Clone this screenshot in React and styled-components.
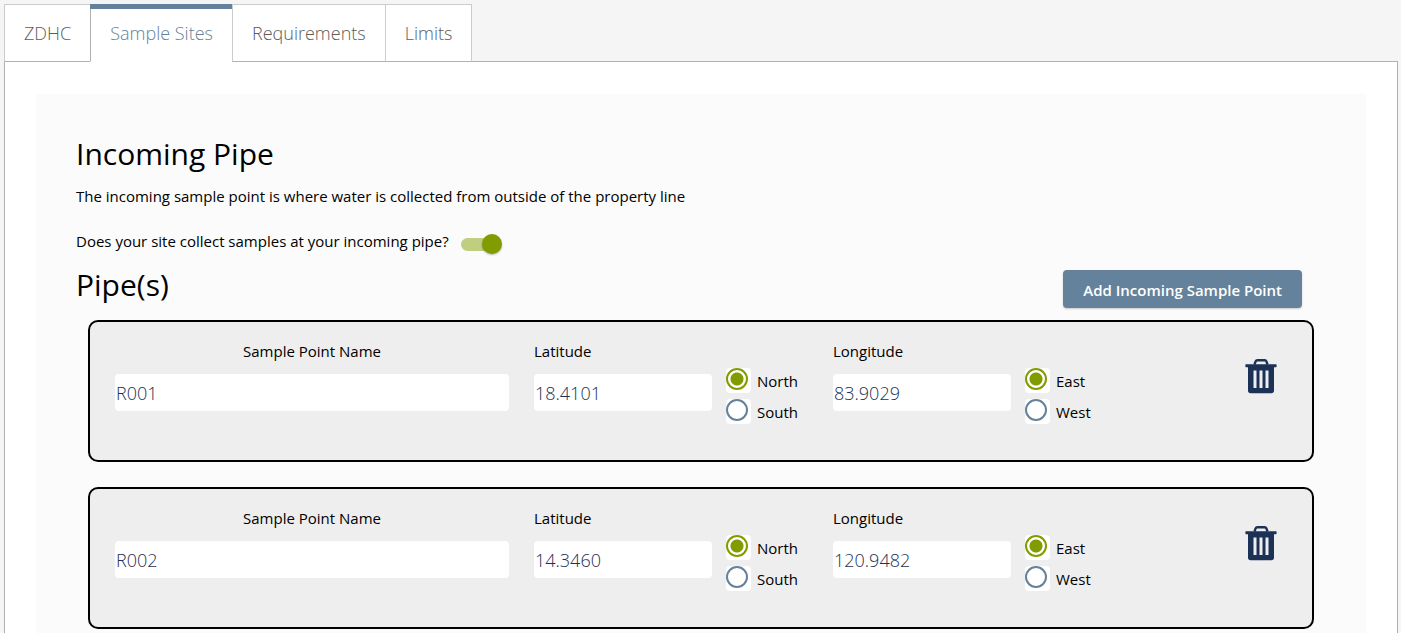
import React, { useState } from 'react';
import styled, { createGlobalStyle } from 'styled-components';

const GlobalStyle = createGlobalStyle`
  *,
  *::before,
  *::after {
    box-sizing: border-box;
  }

  body {
    margin: 0;
    background: #f5f5f5;
    color: #000;
    font-family: 'Open Sans', 'Noto Sans', sans-serif;
    font-size: 15px;
    line-height: 20px;
  }

  button,
  input {
    font-family: inherit;
  }
`;

const Page = styled.main`
  padding: 4px 3px 0 4px;
`;

const TabList = styled.div`
  display: flex;
`;

const Tab = styled.button`
  position: relative;
  height: 58px;
  margin-bottom: -1px;
  padding: 0 19px;
  border: solid #ccc;
  border-width: 1px 0 1px 1px;
  border-bottom-color: #b0b0b0;
  background: #fff;
  color: #5c5c5c;
  font-size: 18px;
  font-weight: 350;
  cursor: pointer;

  &:last-child {
    border-right-width: 1px;
  }

  &[aria-selected='true'] {
    border-left-color: #b0b0b0;
    border-bottom-color: #fff;
    color: #64829b;
  }

  &[aria-selected='true']::before {
    content: '';
    position: absolute;
    top: -1px;
    left: -1px;
    right: 0;
    height: 5px;
    background: #64829b;
  }
`;

const TabPanel = styled.div`
  padding: 32px 31px;
  border: 1px solid #b0b0b0;
  background: #fff;
`;

const Section = styled.section`
  padding: 40px;
  background: #fbfbfb;
`;

const Heading = styled.h2`
  margin: 0;
  font-size: 30px;
  font-weight: 400;
  line-height: 40px;
`;

const Description = styled.p`
  margin: 12px 0 25px;
`;

const ToggleRow = styled.label`
  display: flex;
  align-items: center;
  gap: 12px;
  height: 20px;
`;

const Switch = styled.input.attrs({ type: 'checkbox', role: 'switch' })`
  appearance: none;
  display: flex;
  align-items: center;
  width: 41px;
  height: 20px;
  margin: 6px 0 0;
  border-radius: 10px;
  background: linear-gradient(#ccc, #ccc) center / 100% 13px no-repeat;
  cursor: pointer;

  &::before {
    content: '';
    width: 20px;
    height: 20px;
    border-radius: 50%;
    background: #fafafa;
    box-shadow: 0 1px 2px rgba(0, 0, 0, 0.3);
  }

  &:checked {
    justify-content: flex-end;
    background: none;
  }

  &:checked::after {
    content: '';
    order: -1;
    width: 36px;
    height: 13px;
    margin-right: -15px;
    border-radius: 7px;
    background: #c0ce80;
  }

  &:checked::before {
    position: relative;
    background: #819c00;
  }
`;

const ListHeader = styled.div`
  display: flex;
  justify-content: space-between;
  align-items: flex-start;
  margin: 14px 24px 12px 0;
`;

const AddButton = styled.button`
  height: 38px;
  margin-top: 5px;
  padding: 2px 20px 0;
  border: 0;
  border-radius: 4px;
  background: #64829b;
  color: #fff;
  font-size: 15px;
  font-weight: 600;
  box-shadow: 0 1px 2px rgba(0, 0, 0, 0.2);
  cursor: pointer;
`;

const PointList = styled.div`
  display: flex;
  flex-direction: column;
  gap: 25px;
  margin: 0 12px;
`;

const PointCard = styled.div`
  display: grid;
  grid-template-columns: 394fr 274fr 274fr 155fr;
  column-gap: 25px;
  align-items: start;
  padding: 19px 25px 36px;
  border: 2px solid #000;
  border-radius: 10px;
  background: #eee;
`;

const NameField = styled.div`
  display: flex;
  flex-direction: column;
  gap: 13px;
  text-align: center;
`;

const CoordinateField = styled.div`
  display: grid;
  grid-template-columns: 1fr 82px;
  column-gap: 14px;
  align-items: start;
`;

const FieldLabel = styled.label`
  grid-column: 1 / -1;
`;

const TextInput = styled.input.attrs({ type: 'text' })`
  width: 100%;
  min-width: 0;
  height: 37px;
  padding: 0 1px;
  border: 0;
  border-radius: 4px;
  background: #fff;
  color: #1b3155;
  font-size: 18px;
  font-weight: 350;

  ${CoordinateField} & {
    margin-top: 13px;
  }
`;

const RadioGroup = styled.div`
  display: flex;
  flex-direction: column;
  gap: 6px;
  margin-top: 7px;
`;

const RadioLabel = styled.label`
  display: flex;
  align-items: center;
  gap: 6px;
  height: 25px;
`;

const Radio = styled.input.attrs({ type: 'radio' })`
  appearance: none;
  flex: none;
  width: 25px;
  height: 25px;
  margin: 0;
  border-radius: 4px;
  background: #fff;
  cursor: pointer;

  &::before {
    content: '';
    display: block;
    width: 22px;
    height: 22px;
    border: 2px solid #64829b;
    border-radius: 50%;
  }

  &:checked::before {
    border-color: #819c00;
    background: radial-gradient(circle, #819c00 6px, #fff 7px);
  }
`;

const DeleteButton = styled.button`
  justify-self: end;
  display: flex;
  margin: 18px 10px 0 0;
  padding: 0;
  border: 0;
  background: none;
  color: #1b3155;
  cursor: pointer;
`;

const TrashIcon = () => (
  <svg width="32" height="35" viewBox="0 0 32 35" fill="none" aria-hidden="true">
    <path d="M9.5 5.5 L10.6 2.4 Q11.1 1.2 12.4 1.2 H19.6 Q20.9 1.2 21.4 2.4 L22.5 5.5" stroke="currentColor" strokeWidth="2.4" />
    <path
      fill="currentColor"
      fillRule="evenodd"
      d="M1 5.2 H31 Q31.6 5.2 31.6 5.8 V7.6 Q31.6 8.2 31 8.2 H29 V31.5 Q29 34.2 26.3 34.2 H5.7 Q3 34.2 3 31.5 V8.2 H1 Q.4 8.2 .4 7.6 V5.8 Q.4 5.2 1 5.2 Z M8.5 11.5 V29 H11.5 V11.5 Z M14.5 11.5 V29 H17.5 V11.5 Z M20.5 11.5 V29 H23.5 V11.5 Z"
    />
  </svg>
);

const Coordinate = ({ id, label, value, onChangeValue, directions, direction, onChangeDirection }) => (
  <CoordinateField>
    <FieldLabel htmlFor={id}>{label}</FieldLabel>
    <TextInput id={id} value={value} onChange={e => onChangeValue(e.target.value)} />
    <RadioGroup role="radiogroup" aria-label={`${label} direction`}>
      {directions.map(name => (
        <RadioLabel key={name}>
          <Radio name={`${id}-direction`} checked={direction === name} onChange={() => onChangeDirection(name)} />
          {name}
        </RadioLabel>
      ))}
    </RadioGroup>
  </CoordinateField>
);

const SamplePoint = ({ point, onChange, onDelete }) => (
  <PointCard>
    <NameField>
      <FieldLabel htmlFor={`name-${point.id}`}>Sample Point Name</FieldLabel>
      <TextInput id={`name-${point.id}`} value={point.name} onChange={e => onChange({ name: e.target.value })} />
    </NameField>
    <Coordinate
      id={`latitude-${point.id}`}
      label="Latitude"
      value={point.latitude}
      onChangeValue={latitude => onChange({ latitude })}
      directions={['North', 'South']}
      direction={point.ns}
      onChangeDirection={ns => onChange({ ns })}
    />
    <Coordinate
      id={`longitude-${point.id}`}
      label="Longitude"
      value={point.longitude}
      onChangeValue={longitude => onChange({ longitude })}
      directions={['East', 'West']}
      direction={point.ew}
      onChangeDirection={ew => onChange({ ew })}
    />
    <DeleteButton type="button" aria-label={`Delete ${point.name}`} onClick={onDelete}>
      <TrashIcon />
    </DeleteButton>
  </PointCard>
);

const TABS = ['ZDHC', 'Sample Sites', 'Requirements', 'Limits'];

const INITIAL_POINTS = [
  { id: 1, name: 'R001', latitude: '18.4101', ns: 'North', longitude: '83.9029', ew: 'East' },
  { id: 2, name: 'R002', latitude: '14.3460', ns: 'North', longitude: '120.9482', ew: 'East' },
];

const App = () => {
  const [tab, setTab] = useState('Sample Sites');
  const [collects, setCollects] = useState(true);
  const [points, setPoints] = useState(INITIAL_POINTS);

  const updatePoint = (id, changes) => setPoints(points.map(p => (p.id === id ? { ...p, ...changes } : p)));
  const deletePoint = id => setPoints(points.filter(p => p.id !== id));
  const addPoint = () =>
    setPoints([...points, { id: Date.now(), name: '', latitude: '', ns: 'North', longitude: '', ew: 'East' }]);

  return (
    <>
      <GlobalStyle />
      <Page>
        <TabList role="tablist">
          {TABS.map(name => (
            <Tab key={name} type="button" role="tab" aria-selected={tab === name} onClick={() => setTab(name)}>
              {name}
            </Tab>
          ))}
        </TabList>
        <TabPanel role="tabpanel">
          <Section>
            <Heading>Incoming Pipe</Heading>
            <Description>The incoming sample point is where water is collected from outside of the property line</Description>
            <ToggleRow>
              Does your site collect samples at your incoming pipe?
              <Switch checked={collects} onChange={e => setCollects(e.target.checked)} />
            </ToggleRow>
            <ListHeader>
              <Heading>Pipe(s)</Heading>
              <AddButton type="button" onClick={addPoint}>
                Add Incoming Sample Point
              </AddButton>
            </ListHeader>
            <PointList>
              {points.map(point => (
                <SamplePoint
                  key={point.id}
                  point={point}
                  onChange={changes => updatePoint(point.id, changes)}
                  onDelete={() => deletePoint(point.id)}
                />
              ))}
            </PointList>
          </Section>
        </TabPanel>
      </Page>
    </>
  );
};

export default App;
